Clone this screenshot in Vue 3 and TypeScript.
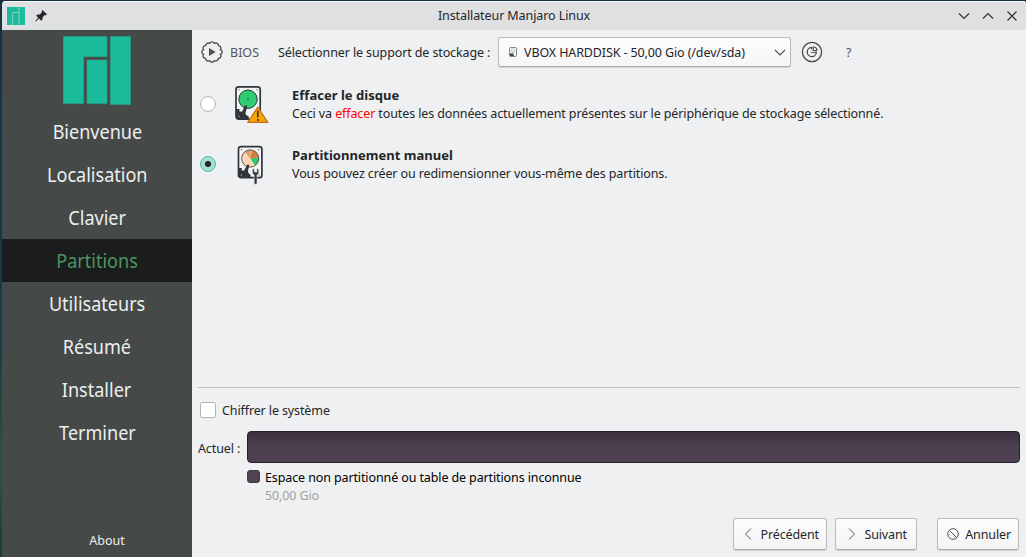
<script setup lang="ts">
import { ref } from 'vue'

interface Step {
  id: string
  label: string
}

interface Choice {
  id: string
  title: string
  before: string
  danger: string
  after: string
}

const steps: Step[] = [
  { id: 'welcome', label: 'Bienvenue' },
  { id: 'locale', label: 'Localisation' },
  { id: 'keyboard', label: 'Clavier' },
  { id: 'partition', label: 'Partitions' },
  { id: 'users', label: 'Utilisateurs' },
  { id: 'summary', label: 'Résumé' },
  { id: 'install', label: 'Installer' },
  { id: 'finish', label: 'Terminer' },
]

const choices: Choice[] = [
  {
    id: 'erase',
    title: 'Effacer le disque',
    before: 'Ceci va ',
    danger: 'effacer',
    after: ' toutes les données actuellement présentes sur le périphérique de stockage sélectionné.',
  },
  {
    id: 'manual',
    title: 'Partitionnement manuel',
    before: 'Vous pouvez créer ou redimensionner vous-même des partitions.',
    danger: '',
    after: '',
  },
]

const activeStep = 'partition'
const selected = ref('manual')
const encrypt = ref(false)
</script>

<template>
  <div class="desktop">
    <div class="window">
      <header class="titlebar">
        <svg class="app-icon" width="18" height="18" viewBox="0 0 18 18">
          <path fill="#1abc9c" d="M0 0H18V18H0Z" />
          <path fill="none" stroke="#8fd5c8" stroke-width=".9" d="M12 0V18M12 5.6H5.6V18" />
        </svg>
        <svg class="pin" width="12" height="12" viewBox="0 0 12 12">
          <path fill="#232629" d="M7.4 0L12 4.2L10.8 5.3L9.8 5L7.6 7.3L7.4 9.8L6.2 10.8L4.2 8.6L0.8 11.6L0.2 11.1L3.3 7.7L1.2 5.7L2.3 4.6L4.7 4.4L7 2.2L6.6 1.1Z" />
        </svg>
        <span class="window-title">Installateur Manjaro Linux</span>
        <div class="controls">
          <svg width="12" height="12" viewBox="0 0 12 12"><path d="M1 3.5L6 8.5L11 3.5" /></svg>
          <svg width="12" height="12" viewBox="0 0 12 12"><path d="M1 8.5L6 3.5L11 8.5" /></svg>
          <svg width="12" height="12" viewBox="0 0 12 12"><path d="M1.5 1.5L10.5 10.5M10.5 1.5L1.5 10.5" /></svg>
        </div>
      </header>

      <div class="body">
        <aside class="sidebar">
          <svg class="logo" width="68" height="69" viewBox="0 0 68 69">
            <path fill="#1abc9c" stroke="#2d9c86" stroke-width="0.8" d="M.4 .4H44V20.7H20.6V67.6H.4ZM24 24H44V67.6H24ZM47.4 .4H67.6V68.5H47.4Z" />
          </svg>
          <nav>
            <div v-for="step in steps" :key="step.id" class="step" :class="{ active: step.id === activeStep }">
              <span>{{ step.label }}</span>
            </div>
          </nav>
          <div class="about">
            <svg width="14" height="14" viewBox="0 0 14 14">
              <circle cx="7" cy="7" r="5.8" fill="none" stroke="#484645" />
              <path d="M7 3.5v1.2M7 6v4.7" stroke="#484645" stroke-width="1.2" />
            </svg>
            <span>About</span>
          </div>
        </aside>

        <main class="content">
          <div class="toolbar">
            <svg class="bios-icon" width="22" height="22" viewBox="0 0 22 22">
              <path
                d="M8.8 2.3Q9.4 .8 11 .8T13.2 2.3Q15 1.5 16.4 2.5T17.5 4.6Q19.4 5 19.9 6.5T19.4 8.7Q21.2 9.6 21.2 11T19.4 13.3Q20.4 14.8 19.7 16.1T17.5 17.4Q17.3 19.1 15.9 19.7T13.2 19.7Q12.4 21.2 11 21.2T8.8 19.7Q7.2 20.5 5.8 19.6T4.5 17.4Q2.7 17.1 2.1 15.7T2.6 13.3Q.8 12.4 .8 11T2.6 8.7Q1.6 7.2 2.3 5.9T4.5 4.6Q4.7 2.9 6.1 2.3T8.8 2.3Z"
                fill="none" stroke="#4d5052" stroke-width="1.35"
              />
              <path d="M8 7V15L14.6 11Z" fill="#4d5052" />
            </svg>
            <span class="bios">BIOS</span>
            <span class="device-label">Sélectionner le support de stockage :</span>
            <button class="select" type="button">
              <svg width="8" height="10" viewBox="0 0 8 10">
                <rect x=".5" y=".5" width="7" height="9" rx="1" fill="#f7f7f7" stroke="#858789" />
                <circle cx="4.2" cy="3.7" r="2" fill="#eee" stroke="#aaa" stroke-width=".5" />
                <path d="M1 6V9H5V7.3H3.3L4.4 4.7L2.3 6.8Z" fill="#44474a" />
              </svg>
              <span>VBOX HARDDISK - 50,00 Gio (/dev/sda)</span>
              <svg class="chevron" width="12" height="7" viewBox="0 0 12 7"><path d="M1 1L6 6L11 1" fill="none" stroke="#4d5052" stroke-width="1.1" /></svg>
            </button>
            <svg class="chart-icon" width="22" height="22" viewBox="0 0 22 22" fill="none" stroke="#45484b">
              <circle cx="11" cy="11" r="9.6" stroke-width="1.3" />
              <path d="M10.5 6.4A4.6 4.6 0 1 0 15.4 11.5H10.5Z" stroke-width="1.2" />
              <path d="M12.2 6V9.6H15.8V8.2A3.6 3.6 0 0 0 13.6 6Z" stroke-width="1.1" />
              <path d="M10.5 8.2V10.8H13.4" stroke="#eff0f1" stroke-width="1.1" />
            </svg>
            <span class="help">?</span>
          </div>

          <div class="choices">
            <label v-for="choice in choices" :key="choice.id" class="choice" @click="selected = choice.id">
              <span class="radio" :class="{ checked: selected === choice.id }"></span>
              <svg v-if="choice.id === 'erase'" class="disk" width="36" height="40" viewBox="0 0 36 40">
                <rect x="2" y="1.9" width="24.2" height="32.2" rx="2.6" fill="#f4f5f5" stroke="#31363b" stroke-width="1.7" />
                <circle cx="14" cy="14.2" r="9.2" fill="#2ecc71" stroke="#31363b" />
                <circle cx="14" cy="14.2" r=".9" fill="#176a3a" />
                <path d="M2 24H5.5V26.4H8.2L10.7 20.7Q12 19.6 13.2 21.1Q12.8 24 11.9 26.6Q10.3 30.5 14.5 31L15 34H4Q2 34 2 32Z" fill="#31363b" />
                <path d="M4.5 4.8h1M22.5 4.8h1" stroke="#31363b" />
                <path d="M4.4 31.2h1.2" stroke="#c9cbcc" />
                <path d="M23.8 22L33.8 37.4H13.8Z" fill="#f5a505" stroke="#c96b13" stroke-width="1.2" stroke-linejoin="round" />
                <path d="M23.8 25.5V32.3M23.8 33.8V36" stroke="#302b22" stroke-width="1.5" />
              </svg>
              <svg v-else class="disk" width="36" height="40" viewBox="0 0 36 40">
                <rect x="4.5" y="1.7" width="23.4" height="31" rx="2.5" fill="#f4f5f5" stroke="#31363b" stroke-width="1.7" />
                <circle cx="16.2" cy="13.5" r="8.6" fill="#ffd6b8" />
                <path d="M16.2 13.5L18.3 5.2Q23.8 6.8 24.7 12.6Z" fill="#d77b40" />
                <path d="M16.2 13.5L10.8 6.8Q14 4.4 17.5 5Z" fill="#dda071" />
                <path d="M16.2 13.5L24.7 12.6Q24.9 17.6 21.1 20.5Z" fill="#2ecc71" />
                <circle cx="16.2" cy="13.5" r="8.6" fill="none" stroke="#50433d" stroke-width=".9" />
                <path d="M4.5 23H7.7V25.4H10.2L13 19.9Q14.2 18.9 15.3 20.2L14.1 25.2Q13.8 28.7 16.5 29.4V33H6.5Q4.5 33 4.5 31Z" fill="#31363b" />
                <path d="M7 4.6h1M24.2 4.6h1M24.6 30h1" stroke="#31363b" />
                <path d="M6.8 30h1.2" stroke="#c9cbcc" />
                <path d="M18.6 24Q17.4 28.8 20.2 30V38.4Q21.6 40.2 23 38.4V30Q25.8 28.8 24.6 24L22.9 23.4V27H20.3V23.4Z" fill="#31363b" stroke="#f4f5f5" stroke-width=".5" />
              </svg>
              <span class="choice-text">
                <b>{{ choice.title }}</b>
                <span class="description">{{ choice.before }}<em v-if="choice.danger">{{ choice.danger }}</em>{{ choice.after }}</span>
              </span>
            </label>
          </div>

          <div class="spacer"></div>
          <div class="divider"></div>
          <label class="encrypt">
            <input v-model="encrypt" type="checkbox" />
            <span>Chiffrer le système</span>
          </label>
          <div class="current">
            <span class="current-label">Actuel :</span>
            <div class="disk-bar"></div>
          </div>
          <div class="legend">
            <i class="swatch"></i>
            <div>
              <span class="legend-name">Espace non partitionné ou table de partitions inconnue</span>
              <span class="legend-size">50,00 Gio</span>
            </div>
          </div>

          <footer class="actions">
            <button class="button previous" type="button">
              <svg width="8" height="12" viewBox="0 0 8 12"><path d="M7 .5L1.5 6L7 11.5" /></svg>
              <span>Précédent</span>
            </button>
            <button class="button next" type="button">
              <svg width="8" height="12" viewBox="0 0 8 12"><path d="M1 .5L6.5 6L1 11.5" /></svg>
              <span>Suivant</span>
            </button>
            <button class="button cancel" type="button">
              <svg width="12" height="12" viewBox="0 0 12 12"><circle cx="6" cy="6" r="5.3" /><path d="M2.3 2.3L9.7 9.7" /></svg>
              <span>Annuler</span>
            </button>
          </footer>
        </main>
      </div>
    </div>
  </div>
</template>

<style>
html,
body {
  overflow: hidden;
}
</style>

<style scoped>
* {
  box-sizing: border-box;
}
.desktop {
  width: 1026px;
  height: 557px;
  padding: 1px 0 0 2px;
  background: linear-gradient(#17303f, #163d45 60%, #2c514b 85%, #153d2c);
  font-family: "Noto Sans", sans-serif;
  font-size: 12.5px;
  line-height: 18px;
  letter-spacing: -0.115px;
  color: #232629;
  white-space: nowrap;
}
button {
  font: inherit;
  letter-spacing: inherit;
  color: inherit;
}
.window {
  display: flex;
  flex-direction: column;
  height: 556px;
  background: #eff0f1;
  border-radius: 4px 3px 0 0;
  overflow: hidden;
}
.titlebar {
  display: flex;
  align-items: center;
  flex: none;
  height: 29px;
  padding: 0 8px 0 5px;
  background: #dee0e2;
  border-top: 1px solid #f8f9f9;
}
.pin {
  margin-left: 10px;
}
.window-title {
  flex: 1;
  padding-left: 23px;
  text-align: center;
  letter-spacing: -0.09px;
}
.controls {
  display: flex;
  gap: 12px;
}
.controls path {
  fill: none;
  stroke: #303336;
  stroke-width: 1.15;
}
.body {
  display: flex;
  flex: 1;
}
.sidebar {
  display: flex;
  flex-direction: column;
  align-items: center;
  width: 190px;
  padding: 6px 0 7px;
  background: #454948;
  color: #ecefef;
}
.logo {
  display: block;
}
nav {
  align-self: stretch;
  margin-top: 5px;
}
.step {
  display: flex;
  align-items: center;
  justify-content: center;
  height: 43px;
  font-size: 19.5px;
  letter-spacing: 0;
}
.step span {
  transform: scaleX(0.925);
}
.step.active {
  background: #1b1d1c;
  color: #4d9360;
}
.about {
  display: flex;
  align-items: center;
  gap: 6px;
  margin-top: auto;
  letter-spacing: 0;
}
.content {
  display: flex;
  flex-direction: column;
  flex: 1;
  padding: 7px 6px 7px;
}
.toolbar {
  display: flex;
  align-items: center;
  height: 30px;
}
.bios-icon {
  margin-left: 3px;
}
.bios {
  width: 48px;
  padding-top: 1px;
  margin-left: 7px;
  letter-spacing: 0;
  color: #55585b;
}
.device-label {
  width: 220px;
  padding-top: 1px;
}
.select {
  display: flex;
  align-items: center;
  width: 293px;
  height: 30px;
  padding: 0 4px 0 10px;
  border: 1px solid #b9bbbd;
  border-bottom-color: #a9abad;
  border-radius: 3px;
  background: linear-gradient(#fdfdfd, #f5f5f5);
  box-shadow: 0 1px 1px #d2d3d4;
}
.select span {
  padding-top: 1px;
  margin-left: 7px;
}
.chevron {
  margin-left: auto;
}
.chart-icon {
  margin-left: 10px;
}
.help {
  padding-top: 2px;
  margin-left: 23px;
  color: #55585b;
}
.choices {
  padding-top: 7px;
}
.choice {
  display: flex;
  align-items: center;
  height: 60px;
}
.radio {
  display: flex;
  align-items: center;
  justify-content: center;
  width: 16px;
  height: 16px;
  margin-left: 2px;
  border: 1px solid #b4b6b8;
  border-radius: 50%;
  background: #fff;
}
.radio.checked {
  border-color: #50bfa5;
  background: #a9ddd0;
}
.radio.checked::after {
  width: 6px;
  height: 6px;
  border-radius: 50%;
  background: #232629;
  content: "";
}
.disk {
  margin: 2px 0 0 18px;
}
.choice-text {
  display: flex;
  flex-direction: column;
  margin-left: 22px;
  padding-top: 2px;
}
.choice-text b {
  font-size: 13px;
  line-height: 16px;
  padding-bottom: 2px;
  letter-spacing: 0.02px;
}
em {
  color: #f00;
  font-style: normal;
}
.spacer {
  flex: 1;
}
.divider {
  height: 1px;
  background: #bcbebf;
}
.encrypt {
  display: flex;
  align-items: center;
  gap: 6px;
  height: 18px;
  margin-top: 13px;
  padding-left: 2px;
}
.encrypt span {
  padding-top: 2px;
}
.encrypt input {
  appearance: none;
  width: 16px;
  height: 16px;
  margin: 0;
  border: 1px solid #b2b4b6;
  border-radius: 2px;
  background: #fff;
}
.current {
  display: flex;
  align-items: center;
  margin-top: 12px;
}
.current-label {
  width: 49px;
  padding-top: 4px;
}
.disk-bar {
  flex: 1;
  height: 32px;
  border: 1px solid #28212c;
  border-radius: 4px;
  background: linear-gradient(#3a303d, #4c3f50 50%, #4e4052);
}
.legend {
  display: flex;
  gap: 5px;
  margin: 6px 0 0 49px;
  line-height: 18px;
}
.legend div {
  display: flex;
  flex-direction: column;
}
.swatch {
  width: 13px;
  height: 13px;
  margin-top: 1px;
  border: 1px solid #403944;
  border-radius: 3px;
  background: #4f4354;
}
.legend-name {
  color: #000;
}
.legend-size {
  color: #a0a1a2;
}
.actions {
  display: flex;
  justify-content: flex-end;
  height: 32px;
  margin: 13px 1px 0 0;
}
.button {
  display: flex;
  align-items: center;
  justify-content: space-between;
  height: 32px;
  padding: 0 7px 0 10px;
  border: 1px solid #b9bbbd;
  border-bottom-color: #a9abad;
  border-radius: 3px;
  background: linear-gradient(#fdfdfd, #f4f4f5);
  box-shadow: 0 1px 1px #d2d3d4;
}
.button span {
  padding-top: 2px;
}
.button svg {
  fill: none;
  stroke: #56595b;
}
.previous {
  width: 94px;
}
.next {
  width: 82px;
  margin-left: 8px;
  padding: 0 9px 0 12px;
}
.cancel {
  width: 82px;
  margin-left: 20px;
  padding-left: 9px;
}
</style>
